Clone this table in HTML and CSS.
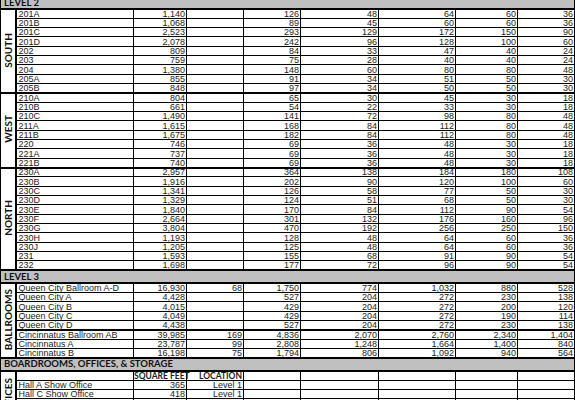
FILE: index.html
```html
<!DOCTYPE html>
<html lang="en">
<head>
<meta charset="utf-8">
<title>Meeting Room Capacities</title>
<link rel="stylesheet" href="styles.css">
</head>
<body>
<table class="sheet">
<colgroup>
<col class="c-side"><col class="c-name"><col class="c-sq"><col class="c-cap"><col class="c-a"><col class="c-b"><col class="c-c"><col class="c-d"><col class="c-e">
</colgroup>
<tbody>
<tr class="lvl lvl-top"><td colspan="9">LEVEL 2</td></tr>

<tr class="r sec"><td class="side" rowspan="9"><span>SOUTH</span></td><td>201A</td><td class="n">1,140</td><td class="n"></td><td class="n">126</td><td class="n">48</td><td class="n">64</td><td class="n">60</td><td class="n">36</td></tr>
<tr class="r"><td>201B</td><td class="n">1,068</td><td class="n"></td><td class="n">89</td><td class="n">45</td><td class="n">60</td><td class="n">60</td><td class="n">36</td></tr>
<tr class="r"><td>201C</td><td class="n">2,523</td><td class="n"></td><td class="n">293</td><td class="n">129</td><td class="n">172</td><td class="n">150</td><td class="n">90</td></tr>
<tr class="r"><td>201D</td><td class="n">2,078</td><td class="n"></td><td class="n">242</td><td class="n">96</td><td class="n">128</td><td class="n">100</td><td class="n">60</td></tr>
<tr class="r"><td>202</td><td class="n">809</td><td class="n"></td><td class="n">84</td><td class="n">33</td><td class="n">47</td><td class="n">40</td><td class="n">24</td></tr>
<tr class="r"><td>203</td><td class="n">759</td><td class="n"></td><td class="n">75</td><td class="n">28</td><td class="n">40</td><td class="n">40</td><td class="n">24</td></tr>
<tr class="r"><td>204</td><td class="n">1,380</td><td class="n"></td><td class="n">148</td><td class="n">60</td><td class="n">80</td><td class="n">80</td><td class="n">48</td></tr>
<tr class="r"><td>205A</td><td class="n">855</td><td class="n"></td><td class="n">91</td><td class="n">34</td><td class="n">51</td><td class="n">50</td><td class="n">30</td></tr>
<tr class="r"><td>205B</td><td class="n">848</td><td class="n"></td><td class="n">97</td><td class="n">34</td><td class="n">50</td><td class="n">50</td><td class="n">30</td></tr>

<tr class="r sec"><td class="side" rowspan="8"><span>WEST</span></td><td>210A</td><td class="n">804</td><td class="n"></td><td class="n">65</td><td class="n">30</td><td class="n">45</td><td class="n">30</td><td class="n">18</td></tr>
<tr class="r"><td>210B</td><td class="n">661</td><td class="n"></td><td class="n">54</td><td class="n">22</td><td class="n">33</td><td class="n">30</td><td class="n">18</td></tr>
<tr class="r"><td>210C</td><td class="n">1,490</td><td class="n"></td><td class="n">141</td><td class="n">72</td><td class="n">98</td><td class="n">80</td><td class="n">48</td></tr>
<tr class="r"><td>211A</td><td class="n">1,615</td><td class="n"></td><td class="n">168</td><td class="n">84</td><td class="n">112</td><td class="n">80</td><td class="n">48</td></tr>
<tr class="r"><td>211B</td><td class="n">1,675</td><td class="n"></td><td class="n">182</td><td class="n">84</td><td class="n">112</td><td class="n">80</td><td class="n">48</td></tr>
<tr class="r"><td>220</td><td class="n">746</td><td class="n"></td><td class="n">69</td><td class="n">36</td><td class="n">48</td><td class="n">30</td><td class="n">18</td></tr>
<tr class="r"><td>221A</td><td class="n">737</td><td class="n"></td><td class="n">69</td><td class="n">36</td><td class="n">48</td><td class="n">30</td><td class="n">18</td></tr>
<tr class="r"><td>221B</td><td class="n">740</td><td class="n"></td><td class="n">69</td><td class="n">36</td><td class="n">48</td><td class="n">30</td><td class="n">18</td></tr>

<tr class="r sec"><td class="side" rowspan="11"><span>NORTH</span></td><td>230A</td><td class="n">2,957</td><td class="n"></td><td class="n">364</td><td class="n">138</td><td class="n">184</td><td class="n">180</td><td class="n">108</td></tr>
<tr class="r"><td>230B</td><td class="n">1,916</td><td class="n"></td><td class="n">202</td><td class="n">90</td><td class="n">120</td><td class="n">100</td><td class="n">60</td></tr>
<tr class="r"><td>230C</td><td class="n">1,341</td><td class="n"></td><td class="n">126</td><td class="n">58</td><td class="n">77</td><td class="n">50</td><td class="n">30</td></tr>
<tr class="r"><td>230D</td><td class="n">1,329</td><td class="n"></td><td class="n">124</td><td class="n">51</td><td class="n">68</td><td class="n">50</td><td class="n">30</td></tr>
<tr class="r"><td>230E</td><td class="n">1,840</td><td class="n"></td><td class="n">170</td><td class="n">84</td><td class="n">112</td><td class="n">90</td><td class="n">54</td></tr>
<tr class="r"><td>230F</td><td class="n">2,664</td><td class="n"></td><td class="n">301</td><td class="n">132</td><td class="n">176</td><td class="n">160</td><td class="n">96</td></tr>
<tr class="r"><td>230G</td><td class="n">3,804</td><td class="n"></td><td class="n">470</td><td class="n">192</td><td class="n">256</td><td class="n">250</td><td class="n">150</td></tr>
<tr class="r"><td>230H</td><td class="n">1,193</td><td class="n"></td><td class="n">128</td><td class="n">48</td><td class="n">64</td><td class="n">60</td><td class="n">36</td></tr>
<tr class="r"><td>230J</td><td class="n">1,205</td><td class="n"></td><td class="n">125</td><td class="n">48</td><td class="n">64</td><td class="n">60</td><td class="n">36</td></tr>
<tr class="r"><td>231</td><td class="n">1,593</td><td class="n"></td><td class="n">155</td><td class="n">68</td><td class="n">91</td><td class="n">90</td><td class="n">54</td></tr>
<tr class="r"><td>232</td><td class="n">1,698</td><td class="n"></td><td class="n">177</td><td class="n">72</td><td class="n">96</td><td class="n">90</td><td class="n">54</td></tr>

<tr class="lvl"><td colspan="9">LEVEL 3</td></tr>

<tr class="r sec"><td class="side" rowspan="8"><span>BALLROOMS</span></td><td>Queen City Ballroom A-D</td><td class="n">16,930</td><td class="n">68</td><td class="n">1,750</td><td class="n">774</td><td class="n">1,032</td><td class="n">880</td><td class="n">528</td></tr>
<tr class="r"><td>Queen City A</td><td class="n">4,428</td><td class="n"></td><td class="n">527</td><td class="n">204</td><td class="n">272</td><td class="n">230</td><td class="n">138</td></tr>
<tr class="r"><td>Queen City B</td><td class="n">4,015</td><td class="n"></td><td class="n">429</td><td class="n">204</td><td class="n">272</td><td class="n">200</td><td class="n">120</td></tr>
<tr class="r"><td>Queen City C</td><td class="n">4,049</td><td class="n"></td><td class="n">429</td><td class="n">204</td><td class="n">272</td><td class="n">190</td><td class="n">114</td></tr>
<tr class="r"><td>Queen City D</td><td class="n">4,438</td><td class="n"></td><td class="n">527</td><td class="n">204</td><td class="n">272</td><td class="n">230</td><td class="n">138</td></tr>
<tr class="r grp"><td>Cincinnatus Ballroom AB</td><td class="n">39,985</td><td class="n">169</td><td class="n">4,836</td><td class="n">2,070</td><td class="n">2,760</td><td class="n">2,340</td><td class="n">1,404</td></tr>
<tr class="r"><td>Cincinnatus A</td><td class="n">23,787</td><td class="n">99</td><td class="n">2,808</td><td class="n">1,248</td><td class="n">1,664</td><td class="n">1,400</td><td class="n">840</td></tr>
<tr class="r"><td>Cincinnatus B</td><td class="n">16,198</td><td class="n">75</td><td class="n">1,794</td><td class="n">806</td><td class="n">1,092</td><td class="n">940</td><td class="n">564</td></tr>

<tr class="lvl"><td colspan="9">BOARDROOMS, OFFICES, &amp; STORAGE</td></tr>

<tr class="r hd sec"><td class="side" rowspan="6"><span>OFFICES</span></td><td></td><td class="n">SQUARE FEET</td><td class="n">LOCATION</td><td></td><td></td><td></td><td></td><td></td></tr>
<tr class="r"><td>Hall A Show Office</td><td class="n">365</td><td class="n">Level 1</td><td></td><td></td><td></td><td></td><td></td></tr>
<tr class="r"><td>Hall C Show Office</td><td class="n">418</td><td class="n">Level 1</td><td></td><td></td><td></td><td></td><td></td></tr>
<tr class="r"><td></td><td class="n"></td><td class="n"></td><td></td><td></td><td></td><td></td><td></td></tr>
<tr class="r"><td></td><td class="n"></td><td class="n"></td><td></td><td></td><td></td><td></td><td></td></tr>
<tr class="r"><td></td><td class="n"></td><td class="n"></td><td></td><td></td><td></td><td></td><td></td></tr>
</tbody>
</table>
</body>
</html>
```

FILE: styles.css
```css
html, body {
  margin: 0;
  padding: 0;
  background: #ffffff;
}

body {
  font-family: "Liberation Sans", Arial, sans-serif;
  font-size: 9px;
  color: #1c1c1c;
}

.sheet {
  border-collapse: collapse;
  table-layout: fixed;
  width: 574px;
  margin-top: -3px;
}

.c-side { width: 15px; }
.c-name { width: 118px; }
.c-sq { width: 53px; }
.c-cap { width: 57px; }
.c-a { width: 57px; }
.c-b { width: 78px; }
.c-c { width: 77px; }
.c-d { width: 62px; }
.c-e { width: 57px; }

.sheet td {
  border: 1px solid #000;
  padding: 0 1px 0 2px;
  line-height: 7px;
  vertical-align: bottom;
  white-space: nowrap;
  overflow: visible;
}

.sheet .n {
  text-align: right;
  padding: 0 1px 0 0;
}

.r { height: 9.33px; }

.sec td { border-top: 2px solid #000; }
.grp td { border-top: 2px solid #000; }

.lvl { height: 13px; }
.lvl td {
  background: #c0c0c0;
  border-top: 2px solid #000;
  border-bottom: 2px solid #000;
  font-family: Lato, "Open Sans", sans-serif;
  font-weight: bold;
  font-size: 9.5px;
  line-height: 10px;
  color: #111;
  vertical-align: middle;
  padding: 0 3px;
}

.lvl-top { height: 12px; }
.lvl-top td { border-top: none; }

.sheet td.side {
  border-left: 1px solid #000;
  border-right: 2px solid #000;
  padding: 0;
  text-align: center;
  vertical-align: middle;
  line-height: normal;
}

.side span {
  display: inline-block;
  writing-mode: vertical-rl;
  transform: rotate(180deg);
  font-family: Lato, "Open Sans", sans-serif;
  font-weight: bold;
  font-size: 10px;
  line-height: 12px;
  color: #111;
}

.hd td {
  font-family: Lato, "Open Sans", sans-serif;
  font-weight: bold;
  font-size: 8.5px;
}
```
